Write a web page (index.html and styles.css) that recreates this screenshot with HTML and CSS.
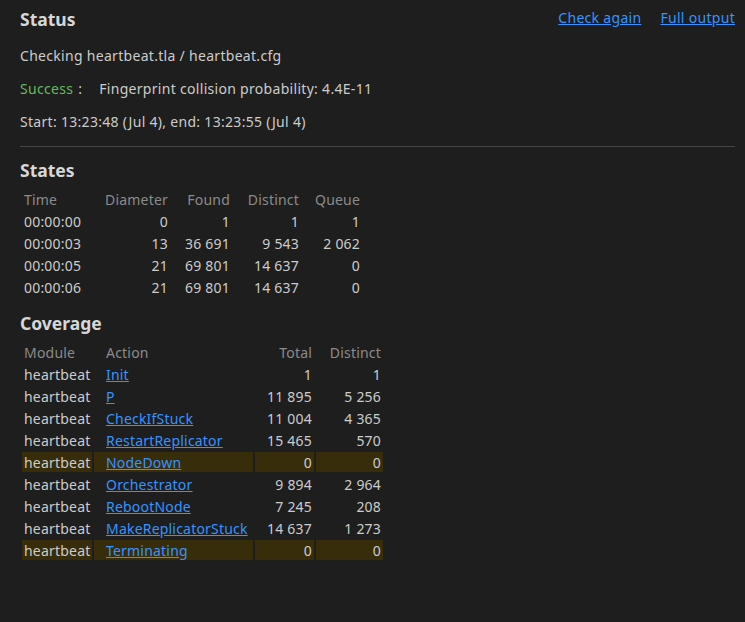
FILE: index.html
```html
<!DOCTYPE html>
<html>
<head>
<meta charset="utf-8">
<link rel="stylesheet" href="styles.css">
</head>
<body>
<header class="status-head">
  <h2 class="title">Status</h2>
  <nav class="actions"><a href="#">Check again</a><a href="#">Full output</a></nav>
</header>
<p class="line">Checking heartbeat.tla / heartbeat.cfg</p>
<p class="line"><span class="ok">Success</span><span class="colon">:</span>Fingerprint collision probability: 4.4E-11</p>
<p class="line">Start: 13:23:48 (Jul 4), end: 13:23:55 (Jul 4)</p>
<div class="sep"></div>

<h2 class="title sec-states">States</h2>
<table class="grid">
  <thead>
    <tr><th class="l w-time">Time</th><th class="r w-diam">Diameter</th><th class="r w-found">Found</th><th class="r w-dist">Distinct</th><th class="r w-queue">Queue</th></tr>
  </thead>
  <tbody>
    <tr><td class="l">00:00:00</td><td class="r">0</td><td class="r">1</td><td class="r">1</td><td class="r">1</td></tr>
    <tr><td class="l">00:00:03</td><td class="r">13</td><td class="r">36&nbsp;691</td><td class="r">9&nbsp;543</td><td class="r">2&nbsp;062</td></tr>
    <tr><td class="l">00:00:05</td><td class="r">21</td><td class="r">69&nbsp;801</td><td class="r">14&nbsp;637</td><td class="r">0</td></tr>
    <tr><td class="l">00:00:06</td><td class="r">21</td><td class="r">69&nbsp;801</td><td class="r">14&nbsp;637</td><td class="r">0</td></tr>
  </tbody>
</table>

<h2 class="title sec-cov">Coverage</h2>
<table class="grid">
  <thead>
    <tr><th class="l w-mod">Module</th><th class="l w-act">Action</th><th class="r w-tot">Total</th><th class="r w-cdist">Distinct</th></tr>
  </thead>
  <tbody>
    <tr><td class="l">heartbeat</td><td class="l"><a href="#">Init</a></td><td class="r">1</td><td class="r">1</td></tr>
    <tr><td class="l">heartbeat</td><td class="l"><a href="#">P</a></td><td class="r">11&nbsp;895</td><td class="r">5&nbsp;256</td></tr>
    <tr><td class="l">heartbeat</td><td class="l"><a href="#">CheckIfStuck</a></td><td class="r">11&nbsp;004</td><td class="r">4&nbsp;365</td></tr>
    <tr><td class="l">heartbeat</td><td class="l"><a href="#">RestartReplicator</a></td><td class="r">15&nbsp;465</td><td class="r">570</td></tr>
    <tr class="zero"><td class="l">heartbeat</td><td class="l"><a href="#">NodeDown</a></td><td class="r">0</td><td class="r">0</td></tr>
    <tr><td class="l">heartbeat</td><td class="l"><a href="#">Orchestrator</a></td><td class="r">9&nbsp;894</td><td class="r">2&nbsp;964</td></tr>
    <tr><td class="l">heartbeat</td><td class="l"><a href="#">RebootNode</a></td><td class="r">7&nbsp;245</td><td class="r">208</td></tr>
    <tr><td class="l">heartbeat</td><td class="l"><a href="#">MakeReplicatorStuck</a></td><td class="r">14&nbsp;637</td><td class="r">1&nbsp;273</td></tr>
    <tr class="zero"><td class="l">heartbeat</td><td class="l"><a href="#">Terminating</a></td><td class="r">0</td><td class="r">0</td></tr>
  </tbody>
</table>
</body>
</html>
```

FILE: styles.css
```css
html, body {
  background: #1e1e1e;
}
body {
  margin: 0;
  padding: 0 10px 0 20px;
  color: #cccccc;
  font-family: "Noto Sans", sans-serif;
  font-size: 14px;
  line-height: 17px;
  letter-spacing: 0.3px;
}
a {
  color: #3794ff;
  text-decoration: underline;
}
.status-head {
  display: flex;
  justify-content: space-between;
  align-items: flex-start;
  padding-top: 8px;
  height: 31px;
}
.title {
  margin: 0;
  font-size: 17.5px;
  line-height: 22px;
  font-weight: bold;
  letter-spacing: 0;
  color: #d7d7d7;
}
.actions {
  display: flex;
  gap: 19px;
  margin-top: 1px;
}
.line {
  margin: 0;
  padding: 8px 0;
}
.ok {
  color: #62bb5f;
}
.colon {
  margin-left: 5px;
  margin-right: 17px;
}
.sep {
  margin-top: 8px;
  border-top: 1px solid #454545;
}
.sec-states {
  margin-top: 12px;
  margin-bottom: 6px;
}
.sec-cov {
  margin-top: 13px;
  margin-bottom: 6px;
}
.grid {
  border-collapse: separate;
  border-spacing: 2px;
  letter-spacing: 0.2px;
}
.grid th, .grid td {
  box-sizing: border-box;
  height: 20px;
  padding: 2px 2px 0 12px;
  line-height: 18px;
  white-space: nowrap;
}
.grid th:first-child, .grid td:first-child {
  padding-left: 2px;
  padding-right: 1px;
}
.grid th {
  font-weight: normal;
  color: #8b8b8b;
}
.l { text-align: left; }
.r { text-align: right; }
.w-time { width: 68px; }
.w-diam { width: 78px; }
.w-found { width: 60px; }
.w-dist { width: 67px; }
.w-queue { width: 59px; }
.w-mod { width: 70px; }
.w-act { width: 159px; }
.w-tot { width: 59px; }
.w-cdist { width: 67px; }
.zero td {
  background: #382d0b;
}
```
